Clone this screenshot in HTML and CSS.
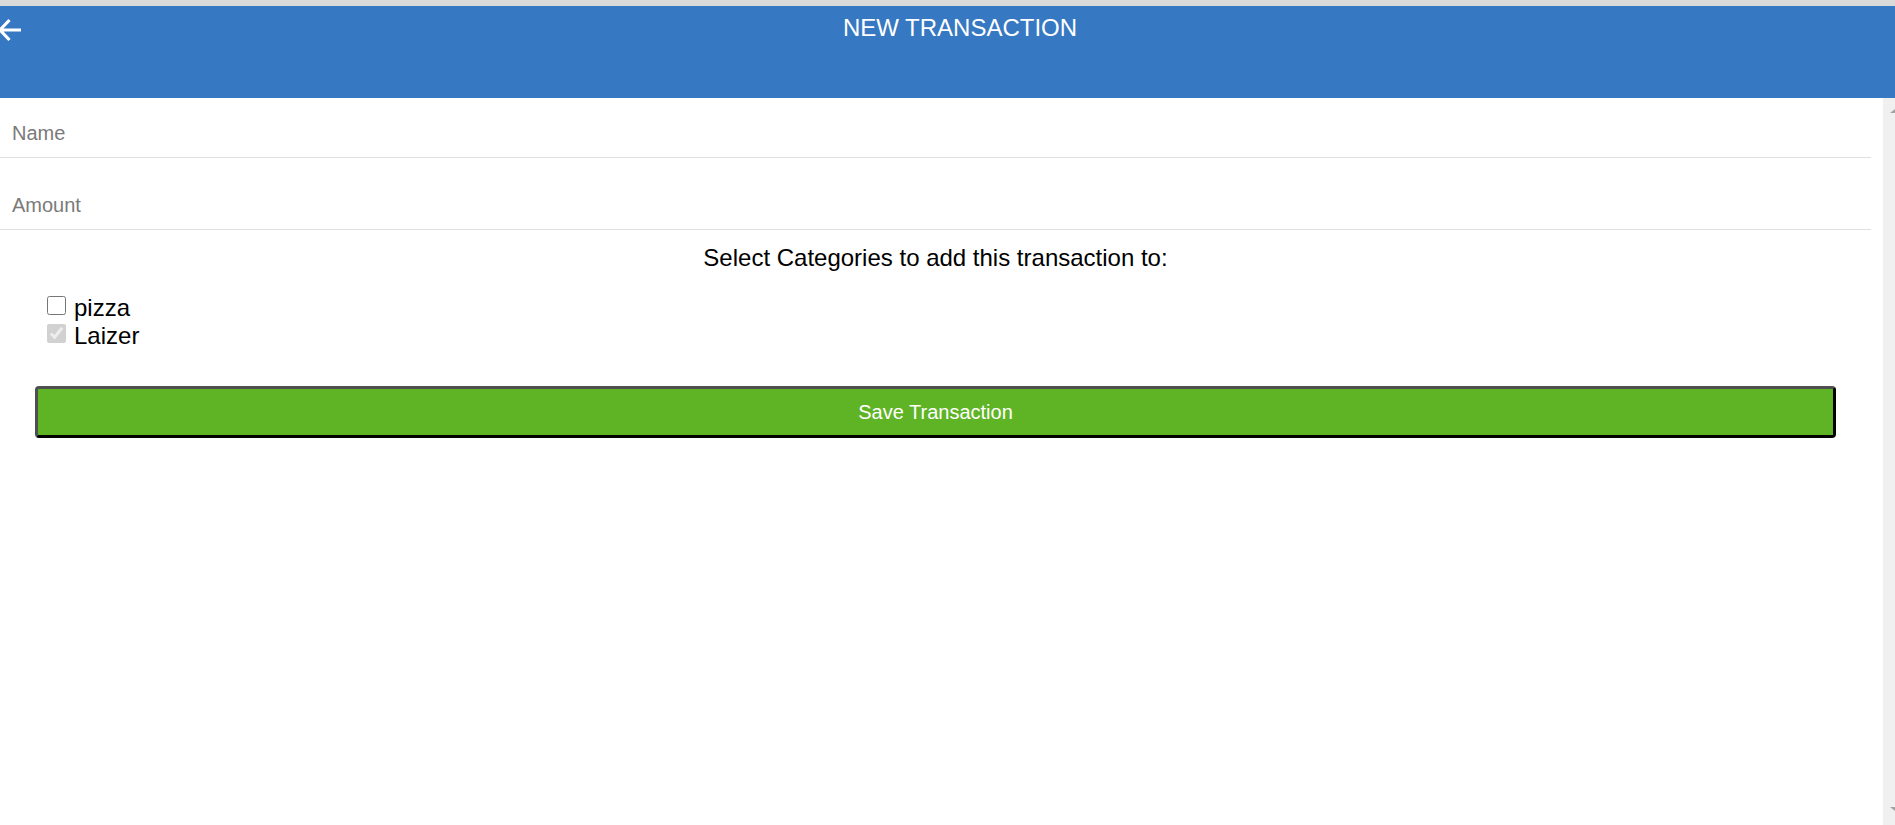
FILE: index.html
```html
<!DOCTYPE html>
<html lang="en">
<head>
<meta charset="utf-8">
<title>New Transaction</title>
<link rel="stylesheet" href="styles.css">
</head>
<body>
<div class="app">
  <div class="topline"></div>
  <header class="header">
    <div class="back">
      <svg class="back-icon" viewBox="0 0 24 24" width="24" height="24" aria-hidden="true">
        <path d="M23 12H3M11.5 2L2 12l9.5 10" fill="none" stroke="#ffffff" stroke-width="3.2"/>
      </svg>
    </div>
    <h1 class="title">NEW TRANSACTION</h1>
  </header>
  <div class="body-row">
    <main class="main">
      <div class="field"><input class="input" type="text" placeholder="Name"></div>
      <div class="field field-second"><input class="input" type="text" placeholder="Amount"></div>
      <p class="prompt">Select Categories to add this transaction to:</p>
      <div class="cats">
        <label class="cat"><input class="check" type="checkbox"><span>pizza</span></label>
        <label class="cat"><input class="check" type="checkbox" checked disabled><span>Laizer</span></label>
      </div>
      <button class="save" type="button">Save Transaction</button>
    </main>
    <div class="scrollbar">
      <span class="arrow-up"></span>
      <span class="arrow-down"></span>
    </div>
  </div>
</div>
</body>
</html>
```

FILE: styles.css
```css
html, body {
  margin: 0;
  padding: 0;
  height: 100%;
  background: #ffffff;
}

body {
  font-family: "Liberation Sans", Arial, sans-serif;
  overflow: hidden;
}

.app {
  height: 825px;
  display: flex;
  flex-direction: column;
}

.topline {
  height: 6px;
  background: #dadada;
}

.header {
  height: 92px;
  background: #3678c2;
  display: flex;
  align-items: flex-start;
  flex-shrink: 0;
}

.back {
  width: 25px;
  flex-shrink: 0;
  padding-top: 12px;
}

.back-icon {
  display: block;
  margin-left: -2px;
}

.title {
  flex: 1;
  margin: 0;
  padding-top: 8px;
  text-align: center;
  color: #ffffff;
  font-weight: normal;
  font-size: 24px;
  line-height: 28px;
}

.body-row {
  flex: 1;
  display: flex;
  min-height: 0;
}

.main {
  flex: 1;
  padding-right: 12px;
  display: flex;
  flex-direction: column;
}

.field {
  border-bottom: 1px solid #e0e0e0;
  padding: 24px 12px 12px;
}

.field-second {
  margin-top: 12px;
}

.input {
  display: block;
  width: 100%;
  border: none;
  outline: none;
  padding: 0;
  margin: 0;
  font-family: "Liberation Sans", Arial, sans-serif;
  font-size: 20px;
  line-height: 23px;
  height: 23px;
  color: #222222;
  background: transparent;
}

.input::placeholder {
  color: #7a7a7a;
}

.prompt {
  margin: 14px 0 0;
  text-align: center;
  font-size: 24px;
  line-height: 28px;
  color: #000000;
}

.cats {
  margin-top: 22px;
  padding-left: 47px;
  display: flex;
  flex-direction: column;
}

.cat {
  display: flex;
  align-items: flex-start;
  gap: 8px;
  font-size: 24px;
  line-height: 28px;
  color: #000000;
}

.check {
  width: 19px;
  height: 19px;
  margin: 2px 0 0;
  flex-shrink: 0;
}

.save {
  margin: 36px 35px 0;
  height: 52px;
  background: #5fb426;
  color: #ffffff;
  font-family: "Liberation Sans", Arial, sans-serif;
  font-size: 20px;
  border-style: solid;
  border-width: 3px;
  border-color: #4f4f4f #000000 #000000 #4f4f4f;
  border-radius: 4px;
  padding: 0;
  cursor: pointer;
}

.scrollbar {
  width: 12px;
  flex-shrink: 0;
  background: #f0f0f0;
  display: flex;
  flex-direction: column;
  justify-content: space-between;
  align-items: flex-end;
  padding: 11px 0 14px;
  overflow: hidden;
}

.arrow-up {
  width: 0;
  height: 0;
  border-left: 5px solid transparent;
  border-bottom: 4px solid #a3a3a3;
}

.arrow-down {
  width: 0;
  height: 0;
  border-left: 5px solid transparent;
  border-top: 4px solid #a3a3a3;
}
```
